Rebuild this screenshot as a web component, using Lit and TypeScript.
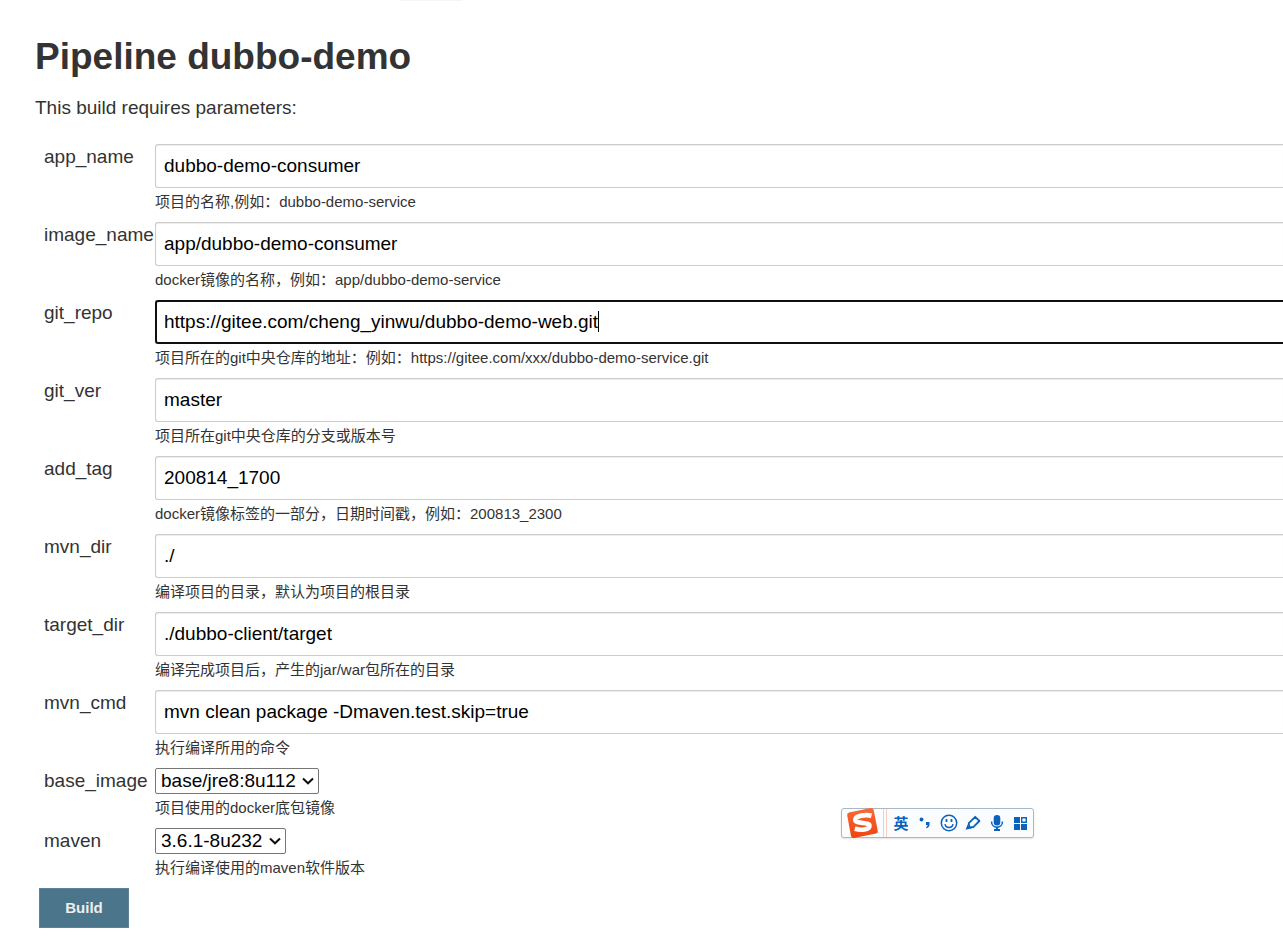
import { LitElement, html, css, nothing } from "lit";
import { customElement } from "lit/decorators.js";
import { classMap } from "lit/directives/class-map.js";

interface Param {
  name: string;
  value: string;
  help: string;
  kind?: "select";
  active?: boolean;
}

const PARAMS: Param[] = [
  { name: "app_name", value: "dubbo-demo-consumer", help: "项目的名称,例如：dubbo-demo-service" },
  { name: "image_name", value: "app/dubbo-demo-consumer", help: "docker镜像的名称，例如：app/dubbo-demo-service" },
  {
    name: "git_repo",
    value: "https://gitee.com/cheng_yinwu/dubbo-demo-web.git",
    help: "项目所在的git中央仓库的地址：例如：https://gitee.com/xxx/dubbo-demo-service.git",
    active: true,
  },
  { name: "git_ver", value: "master", help: "项目所在git中央仓库的分支或版本号" },
  { name: "add_tag", value: "200814_1700", help: "docker镜像标签的一部分，日期时间戳，例如：200813_2300" },
  { name: "mvn_dir", value: "./", help: "编译项目的目录，默认为项目的根目录" },
  { name: "target_dir", value: "./dubbo-client/target", help: "编译完成项目后，产生的jar/war包所在的目录" },
  { name: "mvn_cmd", value: "mvn clean package -Dmaven.test.skip=true", help: "执行编译所用的命令" },
  { name: "base_image", value: "base/jre8:8u112", help: "项目使用的docker底包镜像", kind: "select" },
  { name: "maven", value: "3.6.1-8u232", help: "执行编译使用的maven软件版本", kind: "select" },
];

@customElement("ime-toolbar")
export class ImeToolbar extends LitElement {
  static styles = css`
    :host {
      display: flex;
      align-items: center;
      box-sizing: border-box;
      width: 193px;
      height: 30px;
      padding-left: 4px;
      border: 1px solid #a9b8c6;
      border-radius: 3px;
      background: #fbfcfd;
      box-shadow: 0 1px 2px #0000001f;
      color: #0a62bd;
      font-family: "Liberation Sans", "Noto Sans CJK SC", sans-serif;
    }
    .logo {
      width: 34px;
      height: 32px;
      flex: none;
    }
    .grip {
      width: 2px;
      height: 28px;
      margin: 0 4px 0 3px;
      border: solid #f8cdbd;
      border-width: 0 1px;
      flex: none;
    }
    .tools {
      display: flex;
      align-items: center;
      gap: 4px;
    }
    .tool {
      display: grid;
      place-items: center;
      width: 20px;
      height: 26px;
      padding: 0;
      border: 0;
      background: none;
      color: inherit;
      font: bold 15px/20px "Noto Sans CJK SC", sans-serif;
    }
    .tool svg {
      display: block;
    }
  `;

  render() {
    return html`
      <svg class="logo" viewBox="0 0 34 32" aria-hidden="true">
        <defs>
          <linearGradient id="g" x1="0" y1="0" x2="0" y2="1">
            <stop offset="0" stop-color="#fb6a35" />
            <stop offset="1" stop-color="#ee4310" />
          </linearGradient>
        </defs>
        <path d="M3 5.500Q.8 6 1.200 8.200L5 29Q5.600 31.500 8 31L30 26.500Q32.300 26 31.800 24L27.700 3Q27.200 .6 24.700 1.100Z" fill="url(#g)" />
        <path d="M25.500 8.800C20 7.300 9.500 8.500 9.300 12.800C9.200 17.500 23.500 14.500 23.500 18.700C23.500 22.800 15 23.500 8.800 21.800" fill="none" stroke="#fff" stroke-width="4.600" />
      </svg>
      <span class="grip"></span>
      <div class="tools">
        <button class="tool" type="button">英</button>
        <button class="tool" type="button" aria-label="Punctuation">
          <svg width="18" height="18" viewBox="0 0 18 18" fill="currentColor">
            <circle cx="5.500" cy="5.500" r="1.900" />
            <path d="M10 8h3.500v2.500q0 2.800-2.900 3.800l-.6-1q1.600-.9 1.600-2.300H10z" />
          </svg>
        </button>
        <button class="tool" type="button" aria-label="Emoji">
          <svg width="18" height="18" viewBox="0 0 18 18" fill="none" stroke="currentColor" stroke-width="1.500">
            <circle cx="9" cy="9" r="7.700" />
            <path d="M5 10.200q.6 3.300 4 3.300t4-3.300" />
            <path d="M6.500 5v3M11.500 5v3" stroke-width="1.800" />
          </svg>
        </button>
        <button class="tool" type="button" aria-label="Handwriting">
          <svg width="18" height="18" viewBox="0 0 18 18" fill="none" stroke="currentColor" stroke-width="1.800">
            <path d="M11.200 2.800L15.400 7L9.200 13.200L5.200 13.200L4.800 9.200Z" stroke-linejoin="round" />
            <path d="M4 9.800L1.500 15.800L8.500 14.200L4.800 13.200Z" fill="currentColor" stroke="none" />
          </svg>
        </button>
        <button class="tool" type="button" aria-label="Voice">
          <svg width="18" height="18" viewBox="0 0 18 18" fill="none" stroke="currentColor">
            <rect x="5.700" y="1" width="6.600" height="10.500" rx="3.300" fill="currentColor" stroke="none" />
            <path d="M3.500 7.500C3.500 15 14.500 15 14.500 7.500" stroke-width="1.500" />
            <path d="M9 13v2.500M6 16h6" stroke-width="2" />
          </svg>
        </button>
        <button class="tool" type="button" aria-label="Toolbox">
          <svg width="18" height="18" viewBox="0 0 18 18" fill="currentColor">
            <path d="M2 3h6v6H2zM2 10h6v6H2zM9 10h6v6H9z" />
            <path d="M9.700 3.700h4.600v4.600H9.700z" fill="none" stroke="currentColor" stroke-width="1.400" />
          </svg>
        </button>
      </div>
    `;
  }
}

@customElement("app-root")
export class AppRoot extends LitElement {
  static styles = css`
    :host {
      display: block;
      position: relative;
      min-height: 100vh;
      box-sizing: border-box;
      padding: 35px 0 11px 35px;
      overflow: hidden;
      background: #fff;
      color: #333;
      font-family: "Liberation Sans", "Noto Sans CJK SC", sans-serif;
      font-size: 19px;
      line-height: 22px;
    }
    .title {
      margin: 0 0 18px;
      font-size: 37px;
      line-height: 44px;
      font-weight: bold;
    }
    .intro {
      margin: 0 0 25px;
    }
    .row {
      display: grid;
      grid-template-columns: 111px minmax(0, 1fr);
      align-items: start;
      padding-left: 9px;
    }
    .name {
      padding-top: 2px;
    }
    .field {
      position: relative;
      display: flex;
      flex-direction: column;
      align-items: flex-start;
    }
    .text {
      box-sizing: border-box;
      width: 100%;
      height: 44px;
      margin: 0;
      padding: 0 8px;
      border: 1px solid #ccc;
      border-right: 0;
      border-radius: 3px 0 0 3px;
      box-shadow: inset 0 1px 1px #00000013;
      background: #fff;
      color: #000;
      font: inherit;
      outline: none;
    }
    .text.active {
      padding: 0 7px;
      border-color: #101010;
      border-width: 2px 0 2px 2px;
      box-shadow: none;
    }
    .caret {
      position: absolute;
      left: 9px;
      top: 11px;
      height: 21px;
      border-right: 1px solid #000;
      color: transparent;
      white-space: pre;
      pointer-events: none;
    }
    .caret::before {
      content: attr(data-text);
    }
    .picker {
      display: grid;
      align-items: center;
    }
    .select {
      grid-area: 1 / 1;
      appearance: none;
      box-sizing: border-box;
      height: 26px;
      margin: 0;
      padding: 0 22px 0 5px;
      border: 1px solid #767676;
      border-radius: 2px;
      background: #fff;
      color: #000;
      font: inherit;
    }
    .chevron {
      grid-area: 1 / 1;
      justify-self: end;
      margin-right: 5px;
      fill: none;
      stroke: #101010;
      stroke-width: 2;
      pointer-events: none;
    }
    .help {
      padding: 4px 0 10px;
      font-size: 15px;
      line-height: 20px;
    }
    .build {
      display: block;
      min-width: 90px;
      height: 40px;
      margin-left: 4px;
      padding: 0 20px;
      border: 1px solid #5b8097;
      border-radius: 0;
      background: #4b758b;
      color: #eee;
      font: bold 15px/20px "Liberation Sans", sans-serif;
    }
    .ime {
      position: absolute;
      left: 841px;
      top: 808px;
    }
    .edge {
      position: absolute;
      left: 399px;
      top: 0;
      width: 63px;
      height: 1px;
      background: #f5f5f5;
    }
  `;

  private control(p: Param) {
    if (p.kind === "select") {
      return html`<div class="picker">
        <select class="select" id=${p.name}>
          <option>${p.value}</option>
        </select>
        <svg class="chevron" width="12" height="8" viewBox="0 0 12 8" aria-hidden="true">
          <path d="M1 1.500L6 6.300L11 1.500" />
        </svg>
      </div>`;
    }
    return html`<input
        class=${classMap({ text: true, active: !!p.active })}
        id=${p.name}
        type="text"
        .value=${p.value}
      />${p.active ? html`<span class="caret" data-text=${p.value} aria-hidden="true"></span>` : nothing}`;
  }

  render() {
    return html`
      <div class="edge"></div>
      <main>
        <h1 class="title">Pipeline dubbo-demo</h1>
        <p class="intro">This build requires parameters:</p>
        <form @submit=${(e: Event) => e.preventDefault()}>
          ${PARAMS.map(
            (p) => html`<div class="row">
              <label class="name" for=${p.name}>${p.name}</label>
              <div class="field">
                ${this.control(p)}
                <div class="help">${p.help}</div>
              </div>
            </div>`,
          )}
          <button class="build" type="submit">Build</button>
        </form>
      </main>
      <ime-toolbar class="ime"></ime-toolbar>
    `;
  }
}
